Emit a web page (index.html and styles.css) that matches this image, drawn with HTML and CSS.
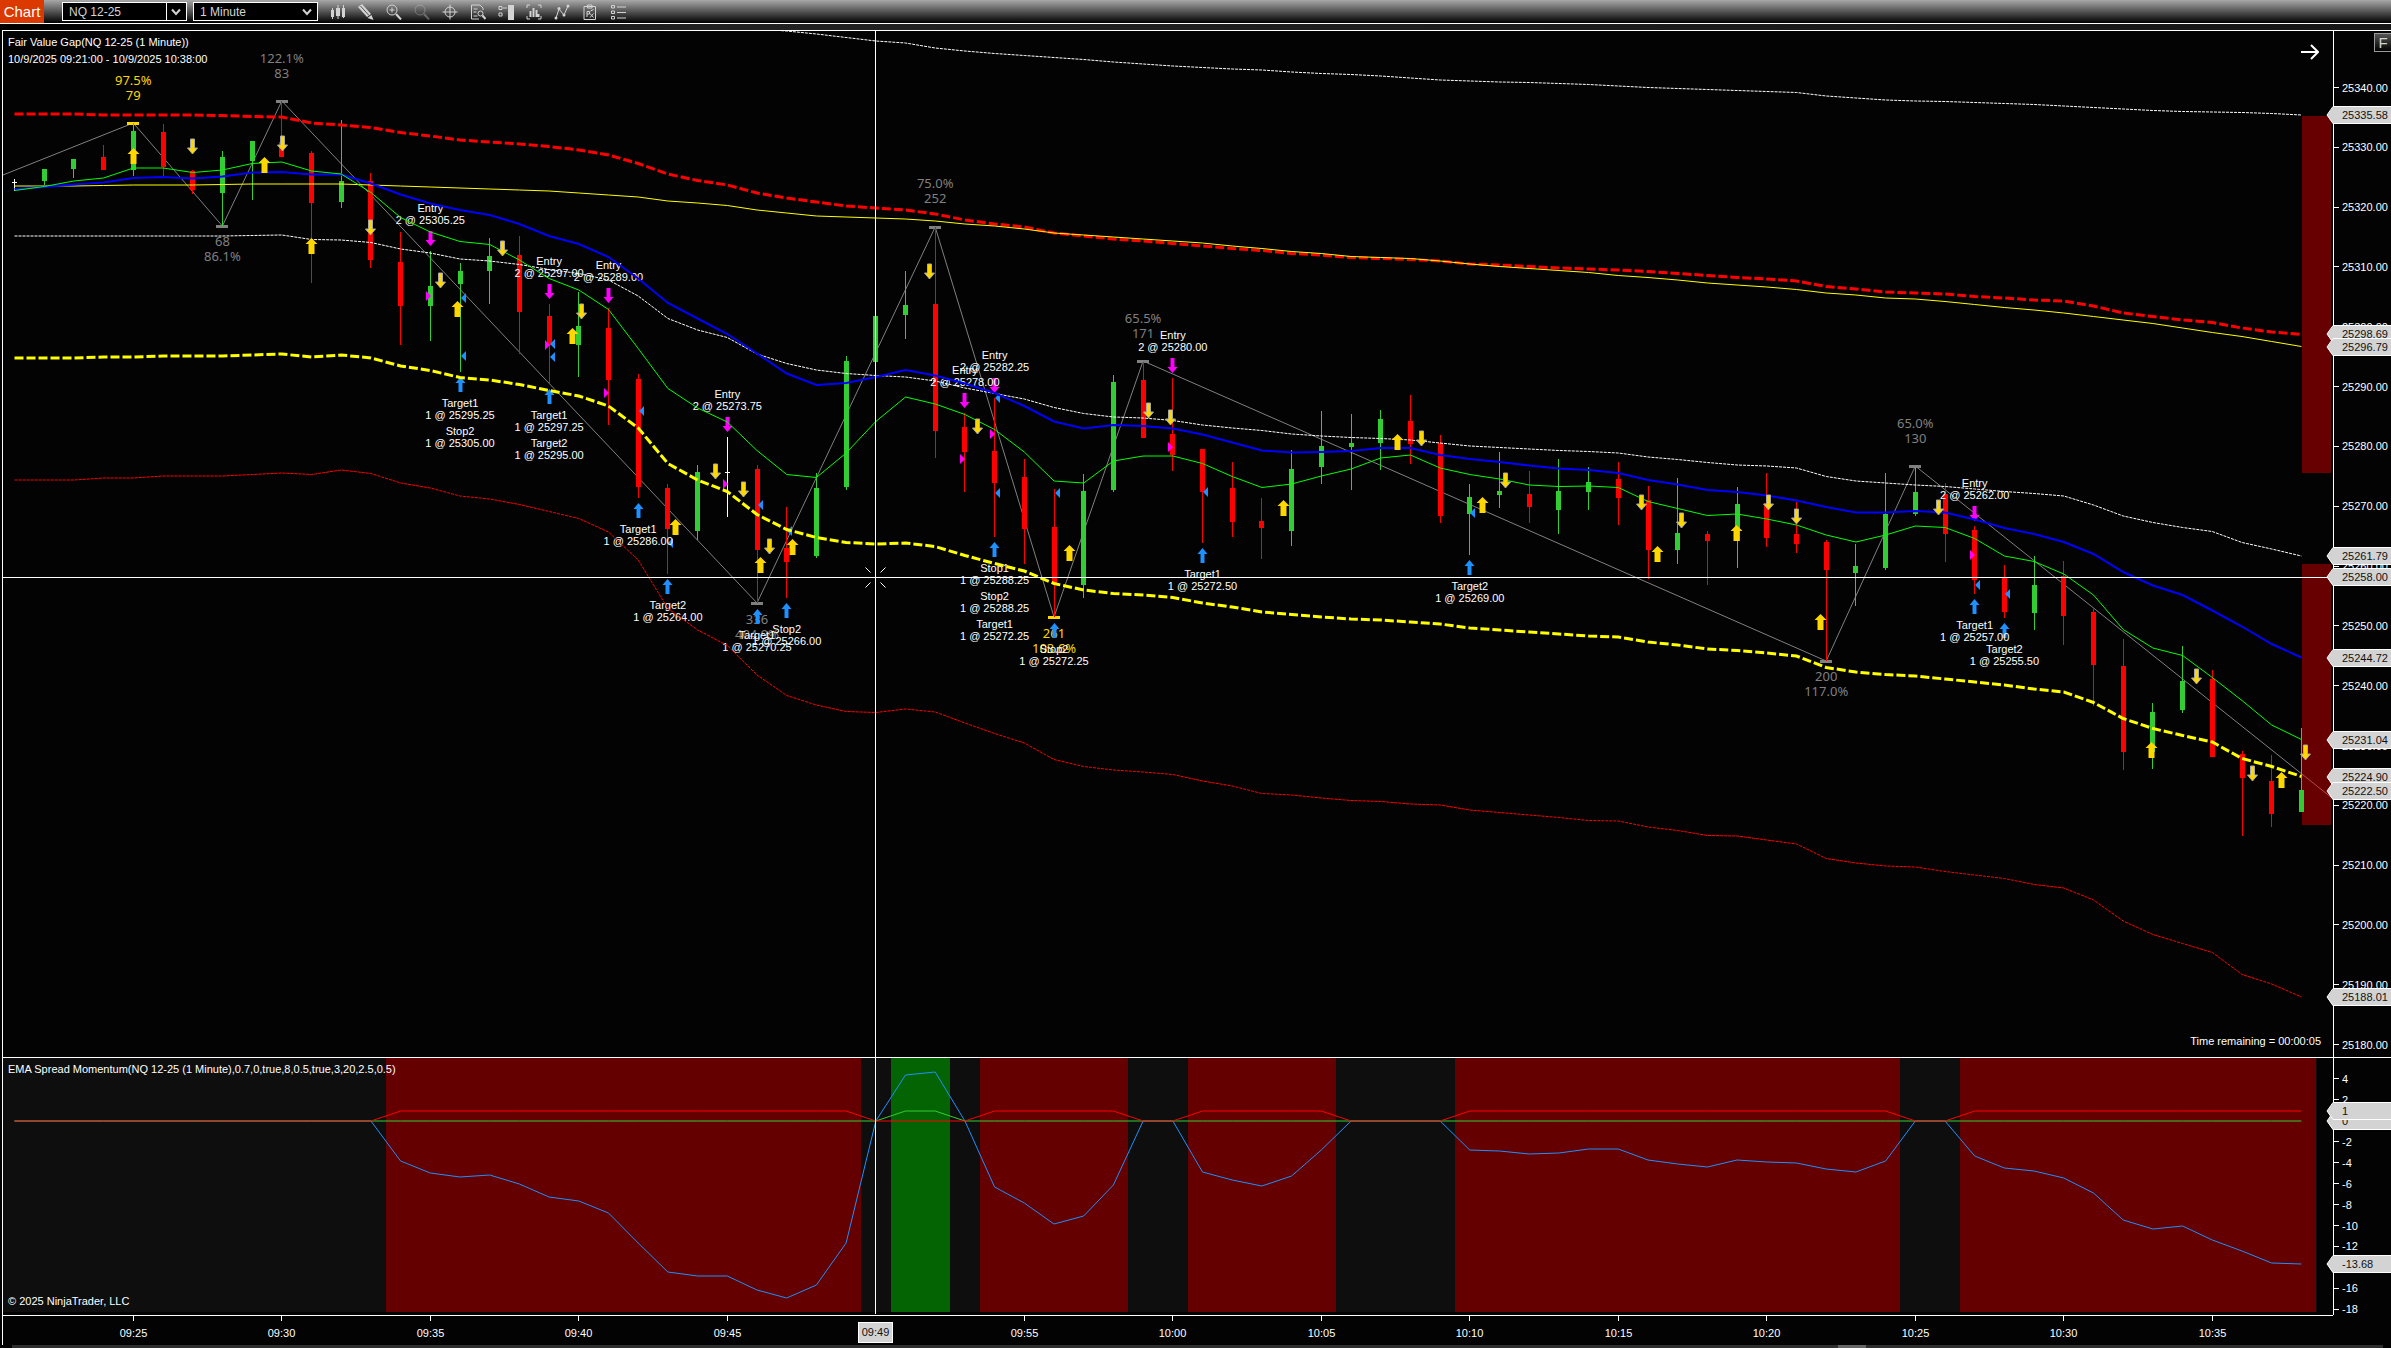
FILE: index.html
```html
<!DOCTYPE html>
<html lang="en">
<head>
<meta charset="utf-8">
<title>Chart - NQ 12-25</title>
<link rel="stylesheet" href="styles.css">
</head>
<body>
<header class="toolbar">
  <h1 class="tab">Chart</h1>
  <div class="picker picker-split">
    <select aria-label="Instrument"><option>NQ 12-25</option></select>
    <svg class="chevron" viewBox="0 0 10 8"><path d="M1 1.5l4 4.5 4-4.5"/></svg>
  </div>
  <div class="picker">
    <select aria-label="Interval"><option>1 Minute</option></select>
    <svg class="chevron" viewBox="0 0 10 8"><path d="M1 1.5l4 4.5 4-4.5"/></svg>
  </div>
  <nav class="tools" aria-label="Chart tools">
    <button type="button" aria-label="Bar style"><svg viewBox="0 0 16 16"><path class="fill" d="M1 6h3v7H1zM6 4h4v8H6zM12 4h3v9h-3z"/><path d="M2.5 4v11M8 1v14M13.5 1v13"/></svg></button>
    <button type="button" aria-label="Drawing tools"><svg viewBox="0 0 16 16"><path class="fill" d="M0 3l4-3 9 10-4 3zM9.5 14l4-3 2 5z"/><path class="cut" d="M2.500 2l8.500 9.500"/></svg></button>
    <button type="button" aria-label="Zoom in"><svg viewBox="0 0 16 16"><circle cx="6" cy="6" r="5"/><path d="M3.5 6h5M6 3.5v5"/><path class="thick" d="M10 10l5 5.5"/></svg></button>
    <button type="button" aria-label="Zoom out" disabled><svg viewBox="0 0 16 16"><circle cx="6" cy="6" r="5"/><path class="thick" d="M10 10l5 5.5"/></svg></button>
    <button type="button" aria-label="Cursor"><svg viewBox="0 0 16 16"><circle cx="8" cy="8" r="5"/><path d="M8 .5v15M.5 8h15"/></svg></button>
    <button type="button" aria-label="Data box"><svg viewBox="0 0 16 16"><path d="M13 6V4l-3-3H1.5v14H9M3.5 5h4M3.5 8h3M3.5 12h4"/><circle cx="10.5" cy="9.5" r="2.5"/><path class="thick" d="M12.5 11.5l3 3.5"/></svg></button>
    <button type="button" aria-label="Chart trader"><svg viewBox="0 0 16 16"><path class="fill" d="M10 1h6v15h-6z"/><path d="M1 2.5h3v3H1zM1 9h3v3H1zM5 4h4"/></svg></button>
    <button type="button" aria-label="Data series"><svg viewBox="0 0 16 16"><path d="M1 4V1h3M12 1h3v3M15 12v3h-3M4 15H1v-3"/><path class="thick" d="M4.5 13V7M7.5 13V4M10.5 13V6M12.5 13v-3"/></svg></button>
    <button type="button" aria-label="Indicators"><svg viewBox="0 0 16 16"><path d="M2 14L5 5l5 6 4-9"/><circle class="fill" cx="2" cy="14" r="1.5"/><circle class="fill" cx="5" cy="4.5" r="1.5"/><circle class="fill" cx="10" cy="11" r="1.5"/><circle class="fill" cx="14" cy="2" r="1.5"/></svg></button>
    <button type="button" aria-label="Strategies"><svg viewBox="0 0 16 16"><path d="M2 2.5h11.5v13H2zM5.5 1h4.5v3H5.5zM5 13V7.5h2.5v2.5H5M8 9.5l3.5 4M11.5 9.5l-3.5 4M8.5 7l3-1.5"/></svg></button>
    <button type="button" aria-label="Properties"><svg viewBox="0 0 16 16"><path d="M1.5 1.5h3v2.5h-3zM1.5 7h3v2.5h-3zM1.5 12.5h3V15h-3zM7 3h9M7 8.5h9M7 14h9"/></svg></button>
  </nav>
</header>
<main class="chart">
  <section class="panel price" aria-label="Price">
    <svg class="plot" id="price"></svg>
    <div class="caption">
      <p>Fair Value Gap(NQ 12-25 (1 Minute))</p>
      <p>10/9/2025 09:21:00 - 10/9/2025 10:38:00</p>
    </div>
    <button class="latest" type="button" aria-label="Go to latest bar"><svg viewBox="0 0 18 16"><path d="M0 8h17M10 1l7 7-7 7"/></svg></button>
    <p class="remaining">Time remaining = 00:00:05</p>
  </section>
  <aside class="scale price-scale">
    <svg class="plot" id="price-scale"></svg>
    <button class="fixed" type="button">F</button>
  </aside>
  <section class="panel momentum" aria-label="Momentum">
    <svg class="plot" id="momentum"></svg>
    <p class="caption">EMA Spread Momentum(NQ 12-25 (1 Minute),0.7,0,true,8,0.5,true,3,20,2.5,0.5)</p>
    <p class="copyright">© 2025 NinjaTrader, LLC</p>
  </section>
  <aside class="scale"><svg class="plot" id="momentum-scale"></svg></aside>
  <footer class="times"><svg class="plot" id="times"></svg></footer>
</main>
<div class="scrollbar"><div class="thumb"></div></div>
<script src="chart.js"></script>
</body>
</html>
```
FILE: styles.css
```css
* { box-sizing: border-box; }

body {
  margin: 0;
  height: 100vh;
  min-height: 600px;
  display: flex;
  flex-direction: column;
  background: #030303;
  color: #fff;
  font: 11px/12px "Liberation Sans", Arial, sans-serif;
  overflow: hidden;
}

p, h1 { margin: 0; }
svg { display: block; }
button { padding: 0; border: 0; background: none; color: inherit; font: inherit; }

/* Toolbar */
.toolbar {
  flex: none;
  display: flex;
  align-items: center;
  height: 24px;
  background: linear-gradient(#a8a8a8, #000 23px);
  border-bottom: 1px solid #fff;
}
.tab {
  width: 44px;
  align-self: stretch;
  margin-right: 18px;
  background: #dc3900;
  font-size: 15px;
  font-weight: 400;
  line-height: 24px;
  text-align: center;
}
.picker {
  position: relative;
  width: 125px;
  height: 19px;
  margin-right: 6px;
}
.picker select {
  width: 100%;
  height: 100%;
  padding: 0 6px;
  appearance: none;
  border: 1px solid #fff;
  border-radius: 0;
  background: #000;
  color: #d3d3d3;
  font: 12px "Liberation Sans", Arial, sans-serif;
}
.picker-split::after {
  content: "";
  position: absolute;
  top: 0;
  bottom: 0;
  right: 20px;
  width: 1px;
  background: #fff;
}
.chevron {
  position: absolute;
  right: 6px;
  top: 6px;
  width: 10px;
  height: 8px;
  fill: none;
  stroke: #d3d3d3;
  stroke-width: 2;
  pointer-events: none;
}
.tools { display: flex; }
.tools button { width: 28px; height: 22px; display: grid; place-items: center; }
.tools button:disabled { opacity: .35; }
.tools svg { width: 16px; height: 16px; fill: none; stroke: #d3d3d3; stroke-width: 1; }
.tools .fill { fill: #d3d3d3; stroke: none; }
.tools .thick { stroke-width: 2; }
.tools .cut { stroke: #555; }

/* Chart grid */
.chart {
  flex: 1;
  min-height: 0;
  display: grid;
  grid-template: minmax(0, 1027fr) minmax(0, 257fr) 30px / minmax(0, 1fr) 58px;
  margin-left: 2px;
  border-left: 1px solid #fff;
  border-top: 1px solid #fff;
  margin-top: 6px;
  position: relative;
}
.chart::before {
  content: "";
  position: absolute;
  left: -3px;
  right: 0;
  top: -7px;
  height: 6px;
  background: linear-gradient(90deg, #000, #222 30%, #161616);
}
.panel, .scale { position: relative; min-width: 0; }
.price, .price-scale { border-bottom: 1px solid #fff; }
.scale { border-left: 1px solid #fff; }
.times { border-top: 1px solid #fff; }
.plot { width: 100%; height: 100%; overflow: visible; }
.price .plot { overflow: hidden; }
.caption { position: absolute; left: 5px; top: 3px; line-height: 17px; }
.copyright { position: absolute; left: 5px; bottom: 8px; }
.remaining { position: absolute; right: 12px; bottom: 10px; }
.latest { position: absolute; right: 14px; top: 13px; width: 18px; height: 16px; }
.latest svg { fill: none; stroke: #fff; stroke-width: 2; }
.fixed {
  position: absolute;
  right: 0;
  top: 2px;
  width: 17px;
  height: 19px;
  border: 1px solid #999;
  border-right: 0;
  background: linear-gradient(#555, #000);
  color: #d3d3d3;
  font-size: 15px;
  line-height: 17px;
}

/* Series */
.band, .ema, .zigzag { fill: none; }
.band-outer { stroke: #fff; stroke-dasharray: 3 1; }
.band-upper { stroke: #f00; stroke-width: 3; stroke-dasharray: 9 3; }
.band-lower { stroke: #ff0; stroke-width: 3; stroke-dasharray: 9 3; }
.band-bottom { stroke: #f00; stroke-dasharray: 3 1; }
.ema-fast { stroke: #0f0; }
.ema-mid { stroke: #00f; stroke-width: 2; }
.ema-slow { stroke: #ff0; }
.zigzag { stroke: #808080; }
.gap { fill: #f00; fill-opacity: .4; }
.up { fill: #32cd32; }
.down { fill: #f00; }
.flat { fill: #fff; }
.solid { shape-rendering: crispEdges; }
.swing { fill: #808080; font: 13px "Noto Sans", sans-serif; text-anchor: middle; }
.swing-key { fill: #ffd700; }
.buy { fill: #ffd700; }
.sell { fill: #ffd700; stroke: #a9a9a9; stroke-width: 1; }
.entry { fill: #f0f; }
.exit { fill: #1e90ff; }
.fills { fill: #fff; text-anchor: middle; }
.cross { fill: none; stroke: #fff; }
.zone-none { fill: #0e0e0e; }
.zone-short { fill: #640000; }
.zone-long { fill: #046404; }
.spread, .long, .short { fill: none; }
.spread { stroke: #1e90ff; }
.long { stroke: #32cd32; }
.short { stroke: #f00; }

/* Scales */
.scale-text { fill: #fff; }
.time-text { fill: #fff; text-anchor: middle; }
.tag { fill: #d3d3d3; }
.tag-edge { fill: none; stroke: #fff; }
.tag-text { fill: #111; }

.scrollbar { flex: none; height: 3px; padding: 0 8px 0 12px; background: #2e2e2e; background-clip: content-box; }
.thumb { height: 3px; width: 28px; margin-left: 77%; background: #666; }
```
FILE: chart.js
```js
// Drawing space shared by all panels; it is mapped onto each panel's real size.
const SPACE = { left: 3, width: 2330, price: [31, 1026], momentum: [1058, 257] };
const FIRST_X = 14.5, STEP = 29.7;
const barX = i => FIRST_X + STEP * i;

// Moving averages and deviation bands, one level per bar.
const TOP_START = 25;
const top3 = [29,31,34,37.5,41,43,48,51,53.5,55.5,57.5,59.5,62,64,66,67.5,69,70,72,73.5,74.5,76,78,80,81,82,82.5,83.5,84.5,86,87.5,88.5,89.5,90.5,91.5,92.5,96,98,100,101,101.5,102.5,103.5,104.5,106,107.5,109,110.5,111.5,112,112.5,113.5,115];
const upper = [114,114,114,115,115,115,115,115.5,116.5,117,123,125,127.5,132.5,136,140,142,144,146.5,150,155,163.5,174,180.5,185,193,198,202,206,208,210,214,220,224,227,233,236,239,241,243.5,246,248.5,250.5,253.5,255,257.5,258.5,259.5,261,264,265,266.5,268,269,270,271.5,273.5,275.5,277.5,279,281,286.5,289,292,293,294,296.5,298,300,301,306,313,316.5,320,322.5,328,332,334.5];
const middle = [236,236,236,236,236,236,236,236,235.5,235,239.5,240,242.5,249,253,259,261,264.5,269.5,273.5,280,296,318.5,330,337.5,354,363.5,370,373.5,375.5,377,381,388,393.5,399,407.5,413.5,417,418,420.5,425,428,430.5,434,436,437.5,438.5,440,443,446,447.5,449,450.5,451.5,453,457,459.5,462.5,465,466,468,476.5,481,483,485,486.5,489,491.5,493.5,496,505,516,522.5,527.5,531.5,542.5,549,556];
const lower = [358,358,358,357,357,356,356,356,355,354,357,355,358,366,370.5,377.5,380,384.5,390.5,396,406,428,463.5,480,491.5,514.5,529.5,537.5,542.5,544,543,546.5,555.5,563.5,571,583.5,590,593.5,595,597.5,603,607,612,614.5,617,619,620,622,624,628,630,632,634,636,637,642,645,649,650.5,653,656,667.5,672,674.5,676,679,682,685,689,692,702.5,718.5,728.5,735.5,742,758.5,766.5,776.5];
const emaMid = [189,187,184.5,182.5,178,177,178.5,176.5,172.5,172,174.5,174.5,183.5,194.5,203.5,210,215,224,236,244,257,278.5,303,318.5,334,353.5,373.5,385,383,377,370,375.5,383.5,393,406,421.5,428.5,425,426,428.5,434.5,442.5,450.5,452.5,452,451,448,448,455,459,462,465.5,468.5,470,473,480,484.5,490,492,495.5,500.5,507,512.5,512.5,511,512.5,519.5,528,534,542,554,572,585.5,595,610.5,626.5,644,657.5];
const emaFast = [190.5,186.5,181,178,168,168,172.5,170,163.5,162,171,174,192.5,217.5,232,241.5,244.5,260,278.5,290,309.5,348.5,388.5,408,422,450.5,474.5,477.5,453,421.5,397,404,414.5,429.5,452,481,483,461,456,456,463.5,476.5,487.5,484,476,469,458,455,468,474.5,479,485,486.5,486,487.5,501.5,508.5,515.5,514,519,525,535,542,535,526,527.5,538.5,556,561.5,574,595,629.5,648,655.5,677.5,700.5,725,739.5];
const emaSlow = [186,186,186,185.5,185,185,185,184.5,184,184,184,184,185,186,187,188,189,190,191,193,195,197,201,203,205.5,210,213,216,217,218,219,221,224,226,229,233,235,237,239,241,243,246,248.5,251.5,253.5,256.5,257.5,258.5,261,264,266.5,268.5,270.5,272.5,275.5,277.5,280,283,285,287,289.5,293,295,298,299,301.5,304.5,307.5,310,313,316.5,320,323.5,328,332.5,336.5,341.5,346.5];

// [direction, high, body top, body bottom, low]
const candles = [
  ['=',179,182,183,191],['+',169,169,181,185],['+',159,159,169,178],['-',145,157,170,170],['+',123,131,170,176],['-',124,132,167,176],
  ['-',170,171,190,194],['+',151,157,193,226],['+',141,141,161,200],['-',101,142,157,157],['-',151,153,203,283],['+',120,181,202,208],
  ['-',173,181,260,268],['-',232,262,306,345],['+',251,286,306,341],['+',263,271,284,372],['+',238,256,271,304],['-',236,255,312,354],
  ['-',304,316,345,383],['+',292,326,345,377],['-',308,328,380,425],['-',374,379,487,498],['-',484,488,529,574],['+',465,472,531,540],
  ['=',437,472,473,517],['-',465,469,550,603],['-',507,548,562,598],['+',473,488,556,558],['+',356,361,487,490],['+',316,316,362,362],
  ['+',271,305,315,339],['-',227,304,431,458],['-',413,427,452,492],['-',398,451,483,537],['-',459,477,529,564],['-',489,527,583,617],
  ['+',474,491,585,598],['+',375,382,490,492],['-',362,380,438,438],['-',378,434,455,471],['-',449,449,492,543],['-',462,488,522,537],
  ['-',498,521,528,559],['+',450,469,531,546],['+',411,446,467,484],['+',414,443,447,490],['+',410,419,443,470],['-',395,421,444,464],
  ['-',435,443,516,523],['+',484,497,514,555],['+',452,491,495,508],['-',471,494,507,523],['+',459,491,510,534],['+',467,482,492,510],
  ['-',462,479,498,525],['-',486,500,550,579],['+',478,533,550,564],['-',531,534,541,585],['+',487,504,541,568],['-',473,503,538,547],
  ['-',502,534,544,553],['-',540,542,570,661],['+',544,566,573,606],['+',473,514,568,570],['+',467,492,514,516],['-',483,494,534,562],
  ['-',526,530,580,594],['-',565,577,612,618],['+',556,585,613,630],['-',561,576,616,645],['-',609,612,665,706],['-',639,666,752,770],
  ['+',703,712,752,769],['+',646,681,710,713],['-',670,679,757,757],['-',751,754,778,836],['-',755,781,814,827],['+',728,790,812,812]
];

// Swing points: [bar, level, label lines, first baseline, highlighted]
const swings = [
  [4,123,['97.5%','79'],85,true],[7,226,['68','86.1%'],246],[9,101,['122.1%','83'],63],[25,603,['336','404.9%'],624],
  [31,227,['75.0%','252'],188],[35,617,['261','103.6%'],638,true],[38,361,['65.5%','171'],323],[61,661,['200','117.0%'],681],[64,466,['65.0%','130'],428]
];
const buys = [[133,148],[264,157],[311,238],[457,301],[572,328],[675,519],[760,557],[792,539],[1069,545],[1283,500],[1397,434],[1482,497],[1657,546],[1736,525],[1820,614],[2151,742],[2281,772]];
const sells = [[192,139],[282,136],[370,220],[440,273],[502,241],[581,304],[715,464],[743,482],[769,539],[929,264],[977,419],[1148,403],[1170,410],[1421,431],[1505,473],[1641,495],[1681,513],[1768,495],[1796,509],[1938,500],[2196,669],[2252,766],[2305,745]];
const entryArrows = [[14,231],[18,284],[20,288],[24,417],[32,393],[33,378],[39,358],[66,506]];
const exitArrows = [[15,377],[18,389],[21,503],[22,579],[25,609],[26,603],[33,542],[35,623],[40,548],[49,560],[66,599],[67,623]];
const entryMarks = [[14,296],[18,345],[20,393],[24,484],[32,459],[33,434],[39,447],[66,555]];
const exitMarks = [[15,298],[15,356],[18,344],[18,357],[21,411],[22,543],[25,505],[26,531],[33,398],[33,493],[35,493],[40,492],[49,513],[66,585],[67,594]];
const fills = [
  [14,212,'Entry','2 @ 25305.25'],[18,265,'Entry','2 @ 25297.00'],[20,269,'Entry','2 @ 25289.00'],[24,398,'Entry','2 @ 25273.75'],
  [32,374,'Entry','2 @ 25278.00'],[33,359,'Entry','2 @ 25282.25'],[39,339,'Entry','2 @ 25280.00'],[66,487,'Entry','2 @ 25262.00'],
  [15,407,'Target1','1 @ 25295.25'],[15,435,'Stop2','1 @ 25305.00'],[18,419,'Target1','1 @ 25297.25'],[18,447,'Target2','1 @ 25295.00'],
  [21,533,'Target1','1 @ 25286.00'],[22,609,'Target2','1 @ 25264.00'],[25,639,'Target1','1 @ 25270.25'],[26,633,'Stop2','1 @ 25266.00'],
  [33,572,'Stop1','1 @ 25288.25'],[33,600,'Stop2','1 @ 25288.25'],[33,628,'Target1','1 @ 25272.25'],[35,653,'Stop2','1 @ 25272.25'],
  [40,578,'Target1','1 @ 25272.50'],[49,590,'Target2','1 @ 25269.00'],[66,629,'Target1','1 @ 25257.00'],[67,653,'Target2','1 @ 25255.50']
];
const CROSS = { bar: 29, level: 577 };

// Momentum
const ZERO = 1121, ONE = 1111;
const spread = [1121,1121,1121,1121,1121,1121,1121,1121,1121,1121,1121,1121,1121,1161,1173,1177,1175,1184,1197,1201,1213,1243,1272,1276,1276,1290,1298,1285,1243,1121,1075,1072,1121,1187,1203,1224,1216,1185,1121,1121,1172,1180,1186,1176,1150,1121,1121,1121,1121,1150,1151,1154,1153,1149,1149,1160,1164,1167,1160,1162,1163,1169,1172,1161,1121,1121,1156,1168,1171,1178,1193,1220,1229,1226,1240,1251,1263,1264];
const shortZones = [[13,28],[33,37],[40,44],[49,63],[66,77]];
const longZones = [[30,31]];

const upArrow = (x, y, w, h) => `M${x} ${y}l${w / 2} 6h-3v${h - 6}h${6 - w}v${6 - h}h-3z`;
const downArrow = (x, y, w, h) => `M${x} ${y + h}l${w / 2}-6h-3v${6 - h}h${6 - w}v${h - 6}h-3z`;
const inZones = (zones, i) => zones.some(([a, b]) => i >= a && i <= b);

function draw() {
  const ids = ['price', 'price-scale', 'momentum', 'momentum-scale', 'times'];
  const el = Object.fromEntries(ids.map(id => [id, document.getElementById(id)]));
  const width = el.price.parentNode.clientWidth;
  const kx = width / SPACE.width;
  const X = x => (x - SPACE.left) * kx;
  const B = i => X(barX(i));
  const mapY = ([top, size], height) => y => (y - top) * height / size;
  const priceH = el.price.parentNode.clientHeight;
  const momentumH = el.momentum.parentNode.clientHeight;
  const P = mapY(SPACE.price, priceH);
  const M = mapY(SPACE.momentum, momentumH);
  const line = (cls, list, Y, start = 0) => {
    const points = list.map((v, i) => `${B(i + start).toFixed(1)},${Y(v).toFixed(1)}`).join(' ');
    return `<polyline class="${cls}" points="${points}"/>`;
  };
  const rect = (cls, x, y, w, h) => `<rect class="${cls}" x="${x}" y="${y}" width="${w}" height="${h}"/>`;

  // Price panel
  let s = '';
  const zig = [[X(3), P(175)], ...swings.map(([i, y]) => [B(i), P(y)]), [X(2332), P(798)]];
  s += `<polyline class="zigzag" points="${zig.map(p => p.join()).join(' ')}"/>`;
  swings.forEach(([i, y, text, base, key]) => {
    const cls = key ? 'swing swing-key' : 'swing';
    s += rect(cls + ' solid', Math.round(B(i)) - 6, Math.round(P(y)) - 1, 12, 3);
    text.forEach((t, n) => { s += `<text class="${cls}" x="${B(i)}" y="${P(base) + 15 * n}">${t}</text>`; });
  });
  [[116, 473], [564, 825]].forEach(([a, b]) => { s += rect('gap solid', X(2302), P(a), 29 * kx, P(b) - P(a)); });
  candles.forEach(([dir, hi, top, bottom, lo], i) => {
    const cls = { '+': 'up', '-': 'down', '=': 'flat' }[dir] + ' solid';
    const x = Math.floor(B(i));
    s += rect(cls, x, P(hi), 1, P(lo) - P(hi)) + rect(cls, x - 2, P(top), 5, Math.max(1, P(bottom) - P(top)));
  });
  const mid = i => Math.floor(B(i)) + 0.5;
  entryArrows.forEach(([i, y]) => { s += `<path class="entry" d="${downArrow(mid(i), P(y), 10, 15)}"/>`; });
  exitArrows.forEach(([i, y]) => { s += `<path class="exit" d="${upArrow(mid(i), P(y), 10, 15)}"/>`; });
  entryMarks.forEach(([i, y]) => { s += `<path class="entry" d="M${mid(i) + 0.5} ${P(y)}l-5-5v10z"/>`; });
  exitMarks.forEach(([i, y]) => { s += `<path class="exit" d="M${mid(i) + 0.5} ${P(y)}l5-5v10z"/>`; });
  fills.forEach(([i, y, name, text]) => {
    s += `<text class="fills" x="${B(i)}" y="${P(y)}">${name}</text><text class="fills" x="${B(i)}" y="${P(y) + 12}">${text}</text>`;
  });
  s += line('band band-outer', top3, P, TOP_START);
  s += line('band band-outer', middle, P);
  s += line('band band-bottom', lower.map((v, i) => 2 * v - middle[i]), P);
  s += line('band band-upper', upper, P) + line('band band-lower', lower, P);
  s += line('ema ema-slow', emaSlow, P) + line('ema ema-mid', emaMid, P) + line('ema ema-fast', emaFast, P);
  buys.forEach(([x, y]) => { s += `<path class="buy" d="${upArrow(X(x) + 0.5, P(y), 12, 16)}"/>`; });
  sells.forEach(([x, y]) => { s += `<path class="sell" d="${downArrow(X(x) + 0.5, P(y), 10, 15)}"/>`; });
  const cx = mid(CROSS.bar), cy = Math.round(P(CROSS.level)) + 0.5;
  s += `<path class="cross" d="M0 ${cy}H${width}M${cx} 0V${priceH}"/>`;
  s += `<path class="cross" d="M${cx - 5} ${cy - 5}l-5-5M${cx + 5} ${cy - 5}l5-5M${cx - 5} ${cy + 5}l-5 5M${cx + 5} ${cy + 5}l5 5"/>`;
  el.price.innerHTML = s;

  // Momentum panel
  const half = STEP / 2;
  s = rect('zone-none solid', 0, 0, X(2317), M(1312));
  const zone = cls => ([a, b]) => {
    s += rect(cls + ' solid', X(barX(a) - half), 0, (b - a + 1) * STEP * kx, M(1312));
  };
  shortZones.forEach(zone('zone-short'));
  longZones.forEach(zone('zone-long'));
  s += line('spread', spread, M);
  s += line('long', spread.map((v, i) => inZones(longZones, i) ? ONE : ZERO), M);
  s += line('short', spread.map((v, i) => inZones(shortZones, i) ? ONE : ZERO), M);
  s += `<path class="cross" d="M${cx} -1V${M(1314)}"/>`;
  el.momentum.innerHTML = s;

  // Scales
  const label = (y, text) => `<path class="cross" d="M0 ${Math.floor(y) + 0.5}h5"/><text class="scale-text" x="8" y="${Math.round(y) + 4}">${text}</text>`;
  const tag = ([y, text], Y) => {
    const c = Math.round(Y(y));
    return `<path class="tag" d="M-7 ${c}l6-8H58v17H-1z"/><path class="tag-edge" d="M58 ${c - 8.5}H-1l-6 8.5 6 8.5H58"/><text class="tag-text" x="8" y="${c + 4}">${text}</text>`;
  };
  s = '';
  for (let p = 25340; p >= 25180; p -= 10) s += label(P(87.5 + (25340 - p) * 5.982), p.toFixed(2));
  s += [[115, '25335.58'], [334, '25298.69'], [347, '25296.79'], [556, '25261.79'], [577, '25258.00'], [658, '25244.72'], [740, '25231.04'], [777, '25224.90'], [791, '25222.50'], [997, '25188.01']].map(t => tag(t, P)).join('');
  el['price-scale'].innerHTML = s;
  s = '';
  for (let v = 4; v >= -18; v -= 2) s += label(M(1120.7 - v * 10.48), v);
  s += [[1121, '0'], [1111, '1'], [1264, '-13.68']].map(t => tag(t, M)).join('');
  el['momentum-scale'].innerHTML = s;

  // Time axis
  s = '';
  for (let i = 4; i < 78; i += 5) {
    const minute = 21 + i, x = mid(i);
    if (i === CROSS.bar) continue;
    const text = `${String(9 + Math.floor(minute / 60)).padStart(2, '0')}:${String(minute % 60).padStart(2, '0')}`;
    s += `<path class="cross" d="M${x} 0v5"/><text class="time-text" x="${x}" y="21">${text}</text>`;
  }
  s += `<rect class="tag" x="${cx - 17}" y="6.5" width="34" height="20"/><rect class="tag-edge" x="${cx - 17}" y="6.5" width="34" height="20"/>`;
  s += `<text class="time-text tag-text" x="${cx}" y="20">09:49</text>`;
  el.times.innerHTML = s;
}

draw();
window.addEventListener('resize', draw);
```
